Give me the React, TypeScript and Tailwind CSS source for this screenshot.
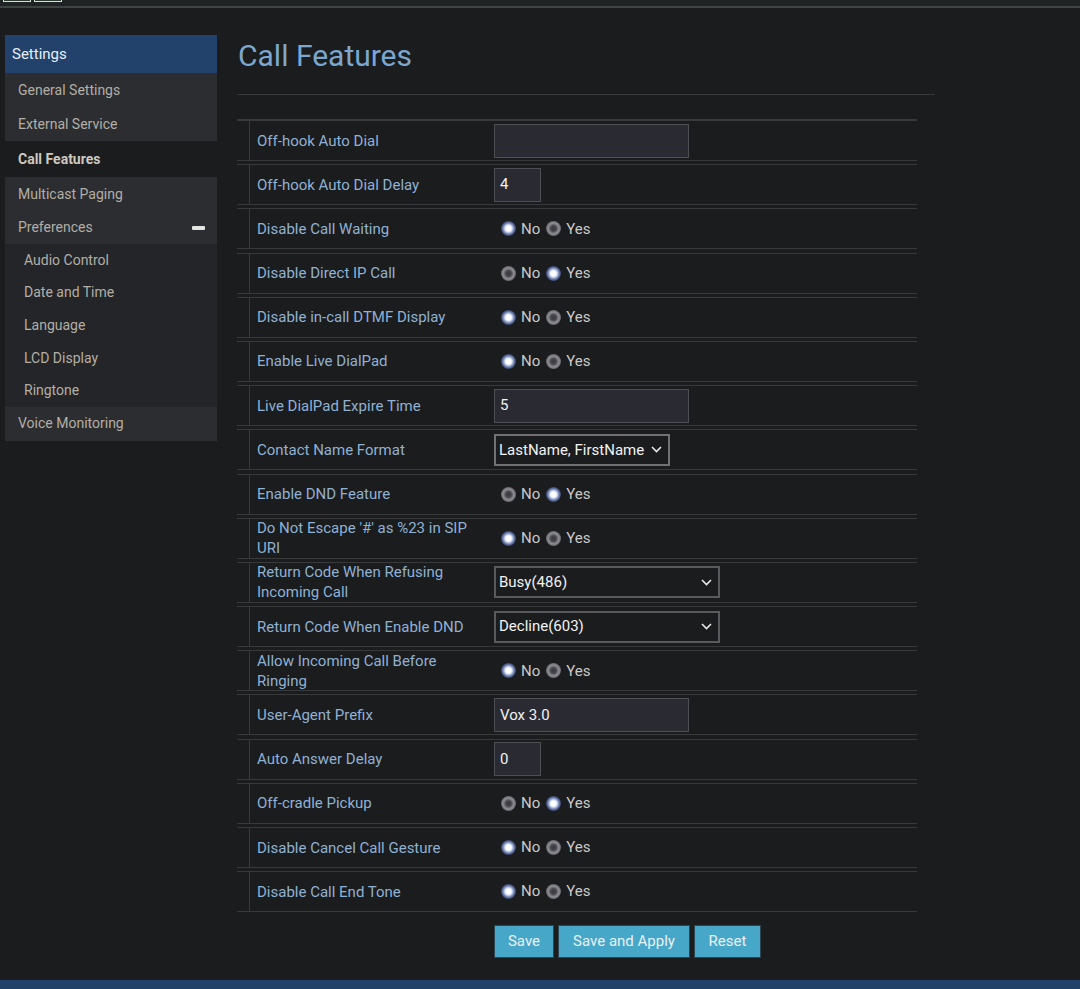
import { ReactNode } from "react";

type Field =
  | { kind: "text"; value: string; small?: boolean }
  | { kind: "radio"; yes: boolean }
  | { kind: "select"; value: string; wide?: boolean };

const rows: { label: string; field: Field }[] = [
  { label: "Off-hook Auto Dial", field: { kind: "text", value: "" } },
  { label: "Off-hook Auto Dial Delay", field: { kind: "text", value: "4", small: true } },
  { label: "Disable Call Waiting", field: { kind: "radio", yes: false } },
  { label: "Disable Direct IP Call", field: { kind: "radio", yes: true } },
  { label: "Disable in-call DTMF Display", field: { kind: "radio", yes: false } },
  { label: "Enable Live DialPad", field: { kind: "radio", yes: false } },
  { label: "Live DialPad Expire Time", field: { kind: "text", value: "5" } },
  { label: "Contact Name Format", field: { kind: "select", value: "LastName, FirstName" } },
  { label: "Enable DND Feature", field: { kind: "radio", yes: true } },
  { label: "Do Not Escape '#' as %23 in SIP URI", field: { kind: "radio", yes: false } },
  { label: "Return Code When Refusing Incoming Call", field: { kind: "select", value: "Busy(486)", wide: true } },
  { label: "Return Code When Enable DND", field: { kind: "select", value: "Decline(603)", wide: true } },
  { label: "Allow Incoming Call Before Ringing", field: { kind: "radio", yes: false } },
  { label: "User-Agent Prefix", field: { kind: "text", value: "Vox 3.0" } },
  { label: "Auto Answer Delay", field: { kind: "text", value: "0", small: true } },
  { label: "Off-cradle Pickup", field: { kind: "radio", yes: true } },
  { label: "Disable Cancel Call Gesture", field: { kind: "radio", yes: false } },
  { label: "Disable Call End Tone", field: { kind: "radio", yes: false } },
];

const buttons = [
  { text: "Save", w: "w-[60px]" },
  { text: "Save and Apply", w: "w-[132px]" },
  { text: "Reset", w: "w-[67px]" },
];

const Radio = ({ on }: { on: boolean }) => (
  <span
    className={`inline-block w-[15px] h-[15px] rounded-full ${
      on
        ? "bg-[radial-gradient(circle,#ffffff_0%,#ffffff_24%,#d2dcf0_34%,#6878a6_55%,#2c3866_74%,rgba(44,56,102,0)_100%)]"
        : "bg-[radial-gradient(circle,#38383e_0%,#46464c_26%,#8e8e94_50%,#66666c_70%,rgba(90,90,96,0)_100%)]"
    }`}
  />
);

const Chevron = () => (
  <svg width="11" height="7" viewBox="0 0 11 7" className="shrink-0">
    <polyline points="1,1 5.5,5.5 10,1" fill="none" stroke="#e8e8e8" strokeWidth="1.6" />
  </svg>
);

const FieldCell = ({ field }: { field: Field }) => {
  if (field.kind === "text") {
    return (
      <div
        className={`${field.small ? "w-[47px]" : "w-[195px]"} h-[34px] bg-[#2a2a32] border border-[#4e4e54] pl-[5px] flex items-center text-[15px] text-[#f2f2f2]`}
      >
        {field.value}
      </div>
    );
  }
  if (field.kind === "select") {
    return (
      <div
        className={`${field.wide ? "w-[226px] border-[#5a5a5e]" : "w-[176px] border-[#717174]"} h-[32px] border-2 bg-[#1b1c1e] pl-[3px] pr-[6px] flex items-center justify-between text-[15px] text-[#f2f2f2]`}
      >
        <span>{field.value}</span>
        <Chevron />
      </div>
    );
  }
  return (
    <div className="flex items-center text-[15px] text-[#c9c9c9] pl-[7px]">
      <Radio on={!field.yes} />
      <span className="ml-[5px] mr-[6px]">No</span>
      <Radio on={field.yes} />
      <span className="ml-[5px]">Yes</span>
    </div>
  );
};

const SideItem = ({
  children,
  active,
  sub,
  h = "h-[34px]",
}: {
  children: ReactNode;
  active?: boolean;
  sub?: boolean;
  h?: string;
}) => (
  <div
    className={`${h} flex items-center text-[14px] ${sub ? "pl-[19px]" : "pl-[13px]"} ${
      active ? "bg-[#1b1c1e] font-bold text-[#cdc8c0]" : "text-[#b3aea6]"
    }`}
  >
    {children}
  </div>
);

const App = () => {
  return (
    <div
      className="min-h-screen bg-[#1b1c1e] flex flex-col"
      style={{ fontFamily: "Roboto, 'Noto Sans', sans-serif" }}
    >
      {/* top strip */}
      <div className="h-[6px] bg-[#1f2324] flex gap-[3px] pl-[3px]">
        <div className="w-[28px] h-[2px] border-x border-b border-[#cfe2cf] bg-[#2a3a2e]" />
        <div className="w-[28px] h-[2px] border-x border-b border-[#cfe2cf] bg-[#2a3a2e]" />
      </div>
      <div className="h-[2px] bg-[#3e4444]" />

      <div className="flex-1 flex pt-[27px] pl-[5px]">
        {/* sidebar */}
        <div className="w-[212px] shrink-0 self-start">
          <div className="h-[38px] bg-[#22426c] flex items-center pl-[7px] text-[15px] text-[#e8eef5]">
            Settings
          </div>
          <div className="bg-[#2b2d30]">
            <SideItem>General Settings</SideItem>
            <SideItem>External Service</SideItem>
          </div>
          <SideItem active h="h-[36px]">
            Call Features
          </SideItem>
          <div className="bg-[#2b2d30]">
            <SideItem>Multicast Paging</SideItem>
            <div className="h-[33px] flex items-center justify-between pl-[13px] pr-[12px] text-[14px] text-[#b3aea6]">
              <span>Preferences</span>
              <span className="w-[13px] h-[4px] rounded-[1px] bg-[#e4e4e4]" />
            </div>
          </div>
          <div className="bg-[#232528]">
            {["Audio Control", "Date and Time", "Language", "LCD Display", "Ringtone"].map((s) => (
              <SideItem key={s} sub h="h-[32.6px]">
                {s}
              </SideItem>
            ))}
          </div>
          <div className="bg-[#2b2d30]">
            <SideItem>Voice Monitoring</SideItem>
          </div>
        </div>

        {/* main */}
        <div className="ml-[20px] w-[698px] pt-[3px]">
          <h1 className="h-[36px] leading-[36px] text-[30px] text-[#7ca7ce] pl-[1px]">Call Features</h1>
          <div className="mt-[20px] h-px bg-[#38393b]" />

          <div className="mt-[24px] w-[680px] flex flex-col gap-[3.2px]">
            {rows.map((r, i) => (
              <div
                key={r.label}
                className={`flex ${i === 0 ? "h-[42px] border-t-2" : "h-[41px] border-t"} border-b border-[#38393b]`}
              >
                <div className="w-[12px] shrink-0" />
                <div className="w-[245px] shrink-0 border-l border-[#38393b] pl-[7px] pr-[12px] flex items-center text-[15px] leading-[20px] text-[#8fb1d3]">
                  {r.label}
                </div>
                <div className="flex-1 flex items-center">
                  <FieldCell field={r.field} />
                </div>
              </div>
            ))}
          </div>

          <div className="mt-[13px] flex gap-[4px] pl-[257px]">
            {buttons.map((b) => (
              <div
                key={b.text}
                className={`${b.w} h-[33px] flex items-center justify-center bg-[#47a7c9] border border-[#2d4452] text-[15px] text-[#e8f1f5]`}
              >
                {b.text}
              </div>
            ))}
          </div>
        </div>
      </div>

      <div className="mt-[21px] h-[9px] bg-[#21406a]" />
    </div>
  );
};

export default App;
